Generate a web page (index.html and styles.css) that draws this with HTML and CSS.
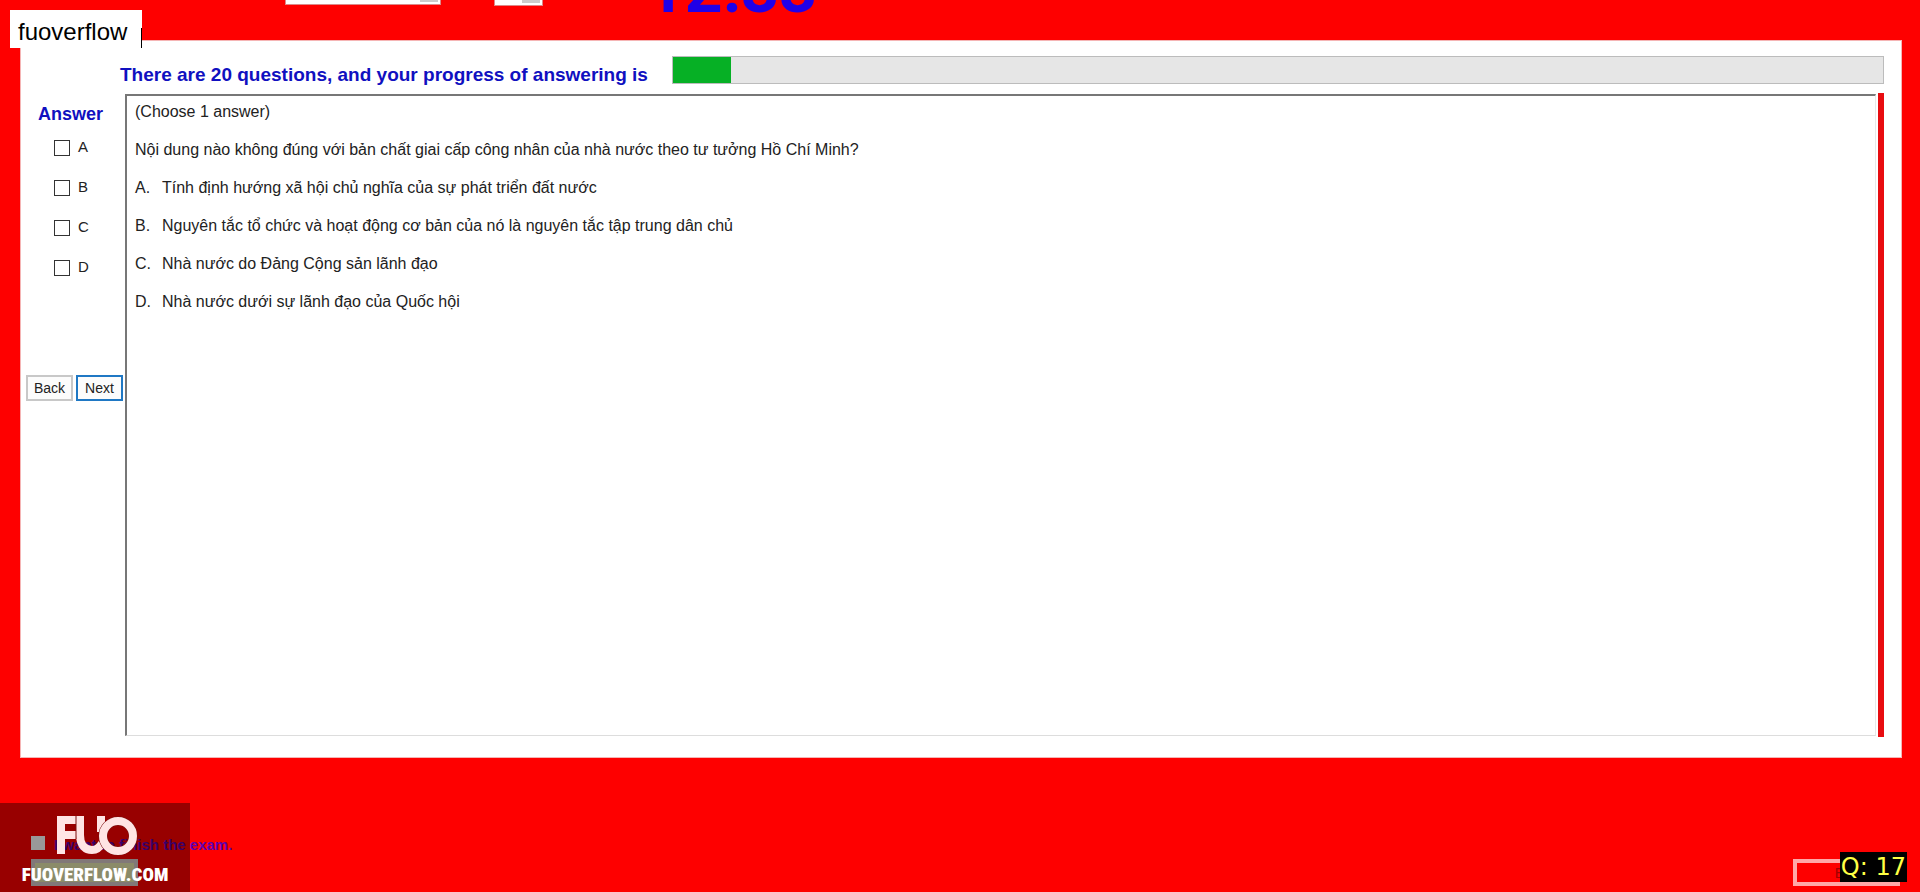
FILE: index.html
```html
<!DOCTYPE html>
<html lang="vi">
<head>
  <meta charset="UTF-8">
  <meta name="viewport" content="width=device-width, initial-scale=1.0">
  <title>Exam - fuoverflow</title>
  <link rel="stylesheet" href="styles.css">
</head>
<body>
  <!-- Top bar, scrolled partly out of view -->
  <header class="topbar">
    <select class="font-select" aria-label="Font"><option></option></select>
    <select class="size-select" aria-label="Size"><option></option></select>
    <div class="clock">12:33</div>
  </header>

  <div class="tab-label">fuoverflow</div>

  <main class="exam">
    <div class="progress-row">
      <h1 id="progressLabel">There are 20 questions, and your progress of answering is</h1>
      <div class="progress" role="progressbar" aria-labelledby="progressLabel" aria-valuenow="1" aria-valuemin="0" aria-valuemax="20">
        <div class="progress-fill" style="width: 4.8%"></div>
      </div>
    </div>

    <div class="exam-body">
      <aside class="answers">
        <h2>Answer</h2>
        <label class="choice"><input type="checkbox"> A</label>
        <label class="choice"><input type="checkbox"> B</label>
        <label class="choice"><input type="checkbox"> C</label>
        <label class="choice"><input type="checkbox"> D</label>
        <div class="nav">
          <button class="btn">Back</button>
          <button class="btn btn-focus">Next</button>
        </div>
      </aside>

      <div class="question-wrap">
        <section class="question">
          <p>(Choose 1 answer)</p>
          <p>Nội dung nào không đúng với bản chất giai cấp công nhân của nhà nước theo tư tưởng Hồ Chí Minh?</p>
          <p class="option"><span>A.</span><span>Tính định hướng xã hội chủ nghĩa của sự phát triển đất nước</span></p>
          <p class="option"><span>B.</span><span>Nguyên tắc tổ chức và hoạt động cơ bản của nó là nguyên tắc tập trung dân chủ</span></p>
          <p class="option"><span>C.</span><span>Nhà nước do Đảng Cộng sản lãnh đạo</span></p>
          <p class="option"><span>D.</span><span>Nhà nước dưới sự lãnh đạo của Quốc hội</span></p>
        </section>
      </div>
    </div>
  </main>

  <footer class="footer">
    <div class="finish">
      <label class="finish-label"><input type="checkbox"> I want to finish the exam.</label>
      <button class="finish-btn" aria-label="Finish"></button>
    </div>
    <button class="exit-btn">Exit</button>

    <div class="watermark">
      <svg class="logo" viewBox="0 0 82 40" aria-hidden="true">
        <path d="M5 38V4H20M5 19H20" />
        <path d="M24 0V19C24 30 30 34 36 34C41 34 44 31 46 27M45 0V16" />
        <path class="logo-line" d="M20 0V23" />
        <circle class="logo-gap" cx="62" cy="20" r="15" />
        <circle cx="62" cy="20" r="15" />
      </svg>
      <span>FUOVERFLOW.COM</span>
    </div>
    <div class="counter">Q: 17</div>
  </footer>
</body>
</html>
```
FILE: styles.css
```css
* {
  box-sizing: border-box;
}

body {
  font-family: "Liberation Sans", Arial, sans-serif;
  background: #fe0000;
  color: #222;
  margin: 0;
  min-height: 100vh;
  display: flex;
  flex-direction: column;
  overflow: hidden;
  position: relative;
}

/* Top bar */
.topbar {
  height: 40px;
  padding-left: 285px;
  display: flex;
  align-items: flex-start;
}

.topbar select {
  height: 26px;
  margin-top: -21px;
  appearance: none;
  border: 1px solid #d88;
  border-radius: 0;
  /* grey drop-down arrow box on the right */
  background: linear-gradient(#ccc, #ccc) right 2px top / 18px 22px no-repeat #fff;
}

.font-select {
  width: 156px;
  margin-right: 53px;
}

.topbar .size-select {
  width: 49px;
  margin-top: -20px;
}

.clock {
  margin: -44px 0 0 104px;
  font-family: Roboto, "Liberation Sans", sans-serif;
  font-size: 66px;
  line-height: 68px;
  font-weight: bold;
  color: #2000e8;
}

.tab-label {
  position: absolute;
  left: 10px;
  top: 10px;
  padding: 8px 15px 3px 8px;
  background: linear-gradient(#000, #000) right bottom / 1px 20px no-repeat #fff;
  color: #000;
  font-size: 24px;
  line-height: 27px;
}

/* Exam panel */
.exam {
  flex: 1;
  margin: 0 18px 0 20px;
  padding: 15px 17px 20px 5px;
  background: #fff;
  border: 1px solid #f5b5b5;
  display: flex;
  flex-direction: column;
}

.progress-row {
  display: flex;
  gap: 24px;
  padding-left: 94px;
}

.progress-row h1 {
  margin: 8px 0 0;
  font-size: 19px;
  line-height: 22px;
  color: #1010c0;
}

.progress {
  flex: 1;
  height: 28px;
  background: #e6e6e6;
  border: 1px solid #bcbcbc;
}

.progress-fill {
  height: 100%;
  background: #06b025;
}

.exam-body {
  flex: 1;
  display: flex;
  margin-top: 7px;
}

.answers {
  width: 99px;
}

.answers h2 {
  margin: 11px 0 15px 12px;
  font-size: 18px;
  line-height: 20px;
  color: #1010c0;
}

.choice {
  display: flex;
  gap: 8px;
  height: 40px;
  padding-left: 28px;
  font-size: 15px;
  line-height: 16px;
}

.choice input {
  appearance: none;
  width: 16px;
  height: 16px;
  margin: 1px 0 0;
  border: 1px solid #333;
  background: #fff;
}

.nav {
  display: flex;
  gap: 3px;
  margin-top: 76px;
}

.btn {
  width: 47px;
  height: 26px;
  padding: 0;
  background: #fcfcfc;
  border: 2px solid #c8c8c8;
  color: #222;
  font-family: inherit;
  font-size: 14px;
}

.btn-focus {
  border-color: #1f78c4;
}

.question-wrap {
  flex: 1;
  display: flex;
  padding-right: 2px;
  border-right: 6px solid #e80c10;
}

.question {
  flex: 1;
  margin: 1px 0;
  border: 2px solid #777;
  border-right: 1px solid #e8e8e8;
  border-bottom: 1px solid #ddd;
  padding: 5px 8px;
  font-size: 16px;
  line-height: 22px;
}

.question p {
  margin: 0 0 16px;
}

.option {
  display: flex;
}

.option span:first-child {
  width: 27px;
}

/* Bottom area */
.footer {
  height: 134px;
  padding: 77px 20px 0 31px;
  display: flex;
  justify-content: space-between;
  position: relative;
}

.finish-label {
  display: flex;
  gap: 9px;
  font-size: 15px;
  font-weight: bold;
  line-height: 20px;
  color: #6000b0;
}

.finish-label input {
  appearance: none;
  width: 14px;
  height: 14px;
  margin: 1px 0 0;
  background: #fff;
}

.finish-btn {
  display: block;
  width: 107px;
  height: 27px;
  margin-top: 4px;
  border: 4px solid #d8c8c8;
  background: #e8e8b0;
}

.exit-btn {
  width: 107px;
  height: 27px;
  margin-top: 24px;
  border: 4px solid #ffa8a8;
  background: transparent;
  color: #a00000;
  font-size: 14px;
}

.watermark {
  position: absolute;
  left: 0;
  bottom: 0;
  width: 190px;
  height: 89px;
  padding-top: 13px;
  background: rgba(0, 0, 0, 0.4);
  color: #fff;
  font-family: Impact, "Roboto Condensed", Roboto, sans-serif;
  font-size: 19px;
  font-weight: 900;
  line-height: 24px;
  text-align: center;
}

.logo {
  display: block;
  width: 82px;
  height: 40px;
  margin: 0 0 7px 56px;
  fill: none;
  stroke: #ffe4e4;
  stroke-width: 8;
}

.logo .logo-gap {
  stroke: #7a1010;
  stroke-width: 9;
}

.logo .logo-line {
  stroke: #7a1010;
  stroke-width: 1;
}

.counter {
  position: absolute;
  right: 13px;
  bottom: 10px;
  padding: 0 1px;
  background: #000;
  color: #ff4;
  font-family: "DejaVu Sans", sans-serif;
  font-size: 24px;
  line-height: 30px;
}
```
